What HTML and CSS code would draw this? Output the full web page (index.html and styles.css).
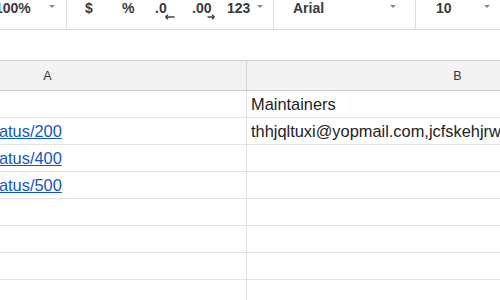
FILE: index.html
```html
<!DOCTYPE html>
<html>
<head>
<meta charset="utf-8">
<link rel="stylesheet" href="styles.css">
</head>
<body>
<div class="toolbar">
  <div class="seg seg-zoom">
    <span class="tb-text zoom-val">100%</span>
    <span class="caret"></span>
  </div>
  <div class="seg seg-format">
    <span class="btn btn-dollar tb-text">$</span>
    <span class="btn btn-pct tb-text">%</span>
    <span class="btn btn-dec1">
      <span class="tb-text">.0</span>
      <svg class="dec-arrow left" width="10" height="6" viewBox="0 0 10 6"><path d="M0.5 3 L3 0.8 M0.5 3 L3 5.2 M0.5 3 H9.5" stroke="#444" stroke-width="1.4" fill="none"/></svg>
    </span>
    <span class="btn btn-dec2">
      <span class="tb-text">.00</span>
      <svg class="dec-arrow right" width="8" height="6" viewBox="0 0 8 6"><path d="M7.5 3 L5 0.8 M7.5 3 L5 5.2 M7.5 3 H0.5" stroke="#444" stroke-width="1.4" fill="none"/></svg>
    </span>
    <span class="btn btn-123 tb-text">123</span>
    <span class="caret"></span>
  </div>
  <div class="seg seg-font">
    <span class="tb-text font-name">Arial</span>
    <span class="caret"></span>
  </div>
  <div class="seg seg-size">
    <span class="tb-text size-val">10</span>
    <span class="caret"></span>
  </div>
</div>

<div class="sheet">
  <div class="colhead">A</div>
  <div class="colhead">B</div>

  <div class="cell a"></div>
  <div class="cell b">Maintainers</div>

  <div class="cell a"><a class="link" href="#">https://httpbin.org/status/200</a></div>
  <div class="cell b">thhjqltuxi@yopmail.com,jcfskehjrw@yopmail.com</div>

  <div class="cell a"><a class="link" href="#">https://httpbin.org/status/400</a></div>
  <div class="cell b"></div>

  <div class="cell a"><a class="link" href="#">https://httpbin.org/status/500</a></div>
  <div class="cell b"></div>

  <div class="cell a"></div>
  <div class="cell b"></div>
  <div class="cell a"></div>
  <div class="cell b"></div>
  <div class="cell a"></div>
  <div class="cell b"></div>
  <div class="cell a"></div>
  <div class="cell b"></div>
</div>
</body>
</html>
```

FILE: styles.css
```css
html, body {
  margin: 0;
  padding: 0;
  background: #ffffff;
}

body {
  width: 500px;
  height: 300px;
  overflow: hidden;
  font-family: "Liberation Sans", Arial, sans-serif;
}

.toolbar {
  display: flex;
  height: 29px;
  border-bottom: 1px solid #dcdcdc;
  width: 700px;
}

.seg {
  display: flex;
  align-items: flex-start;
  height: 29px;
  border-right: 1px solid #dedede;
  box-sizing: border-box;
}

.tb-text {
  font-size: 14px;
  font-weight: bold;
  line-height: 16px;
  color: #3a3a3a;
}

.caret {
  width: 0;
  height: 0;
  border-left: 3px solid transparent;
  border-right: 3px solid transparent;
  border-top: 3px solid #8a8a8a;
  margin-top: 5px;
}

.seg-zoom {
  width: 67px;
}

.zoom-val {
  margin-left: -5px;
}

.seg-zoom .caret {
  margin-left: 18px;
}

.seg-format {
  width: 207px;
  padding-left: 18px;
}

.btn {
  display: flex;
  flex-direction: column;
}

.btn-dollar { width: 37px; }
.btn-pct { width: 33px; }
.btn-dec1 { width: 37px; }
.btn-dec2 { width: 35px; }
.btn-123 { width: 30px; }

.dec-arrow {
  margin-top: -2px;
}

.dec-arrow.left {
  margin-left: 10px;
}

.dec-arrow.right {
  margin-left: 15px;
}

.seg-font {
  width: 142px;
  padding-left: 19px;
}

.font-name {
  width: 97px;
}

.seg-size {
  width: 100px;
  padding-left: 20px;
  border-right: none;
}

.size-val {
  width: 48px;
}

.sheet {
  display: grid;
  grid-template-columns: 398px 422px;
  grid-auto-rows: 27px;
  grid-template-rows: 31px;
  margin-top: 30px;
  margin-left: -151px;
}

.colhead {
  box-sizing: border-box;
  background: #f3f3f3;
  border-top: 1px solid #cdcdcd;
  border-bottom: 1px solid #c9c9c9;
  border-right: 1px solid #d4d4d4;
  display: flex;
  align-items: center;
  justify-content: center;
  font-size: 12.5px;
  color: #333333;
}

.cell {
  box-sizing: border-box;
  border-bottom: 1px solid #e2e2e2;
  border-right: 1px solid #e2e2e2;
  display: flex;
  align-items: center;
  font-size: 16.4px;
  color: #222222;
  white-space: nowrap;
  overflow: hidden;
}

.cell.a {
  padding-left: 6px;
}

.cell.b {
  padding-left: 4px;
}

.link {
  color: #1155cc;
  text-decoration: underline;
}
```
